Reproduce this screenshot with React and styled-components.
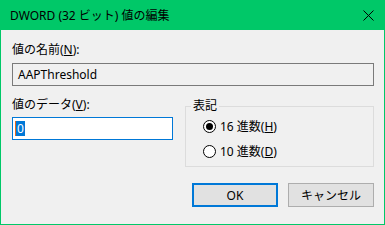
import React from "react";
import styled, { createGlobalStyle } from "styled-components";

const GlobalStyle = createGlobalStyle`
  html, body {
    margin: 0;
    padding: 0;
    background: #f0f0f0;
  }
  body {
    font-family: "Noto Sans", "Noto Sans CJK JP", sans-serif;
    font-size: 12px;
    color: #000;
  }
`;

const Window = styled.div`
  width: 385px;
  height: 225px;
  box-sizing: border-box;
  border: 1px solid #00c868;
  border-top: none;
  background: #f0f0f0;
  display: flex;
  flex-direction: column;
`;

const TitleBar = styled.div`
  height: 30px;
  margin: 0 -1px;
  background: #00c868;
  display: flex;
  align-items: center;
  justify-content: space-between;
  padding: 0 11px 0 10px;
  font-size: 12px;
  color: #000;
`;

const CloseIcon = () => (
  <svg width="11" height="11" viewBox="0 0 11 11">
    <path d="M0.5 0.5 L10.5 10.5 M10.5 0.5 L0.5 10.5" stroke="#000" strokeWidth="1" />
  </svg>
);

const Content = styled.div`
  padding: 0 10px 0 11px;
  display: flex;
  flex-direction: column;
`;

const Label = styled.div`
  height: 16px;
  line-height: 16px;
  margin-top: ${(p) => p.$top || 0}px;
`;

const Key = styled.span`
  text-decoration: underline;
`;

const NameBox = styled.div`
  margin-top: 5px;
  height: 23px;
  box-sizing: border-box;
  border: 1px solid #7a7a7a;
  background: #f0f0f0;
  padding: 0 5px;
  display: flex;
  align-items: center;
`;

const Row = styled.div`
  display: flex;
  gap: 12px;
`;

const LeftCol = styled.div`
  width: 161px;
  display: flex;
  flex-direction: column;
`;

const DataBox = styled.div`
  margin-top: 4px;
  height: 23px;
  box-sizing: border-box;
  border: 1px solid #0078d7;
  background: #fff;
  padding: 0 2px;
  display: flex;
  align-items: center;
`;

const Selected = styled.span`
  background: #0078d7;
  color: #fff;
  line-height: 15px;
  padding: 0 1px;
  border-left: 1px solid #e86a1c;
`;

const Group = styled.fieldset`
  margin: 12px 0 0 0;
  width: 189px;
  box-sizing: border-box;
  border: 1px solid #dcdcdc;
  padding: 4px 0 7px 17px;
  display: flex;
  flex-direction: column;
  gap: 9px;
`;

const Legend = styled.legend`
  padding: 0 2px;
  margin-left: -12px;
  line-height: 16px;
`;

const RadioRow = styled.div`
  height: 16px;
  display: flex;
  align-items: center;
  gap: 4px;
`;

const RadioCircle = styled.span`
  width: 13px;
  height: 13px;
  box-sizing: border-box;
  border: 1px solid #000;
  border-radius: 50%;
  background: #fff;
  display: flex;
  align-items: center;
  justify-content: center;
  &::after {
    content: "";
    display: ${(p) => (p.$checked ? "block" : "none")};
    width: 7px;
    height: 7px;
    border-radius: 50%;
    background: #000;
  }
`;

const Buttons = styled.div`
  margin-top: 16px;
  display: flex;
  justify-content: flex-end;
  gap: 10px;
  padding-left: 179px;
`;

const Button = styled.button`
  width: 86px;
  height: 24px;
  box-sizing: border-box;
  margin: 0;
  padding: 0;
  font: inherit;
  color: #000;
  background: #e1e1e1;
  border: ${(p) => (p.$primary ? "2px solid #0078d7" : "1px solid #adadad")};
`;

export default function App() {
  return (
    <>
      <GlobalStyle />
      <Window>
        <TitleBar>
          <span>DWORD (32 ビット) 値の編集</span>
          <CloseIcon />
        </TitleBar>
        <Content>
          <Label $top={12}>
            値の名前(<Key>N</Key>):
          </Label>
          <NameBox>AAPThreshold</NameBox>
          <Row>
            <LeftCol>
              <Label $top={11}>
                値のデータ(<Key>V</Key>):
              </Label>
              <DataBox>
                <Selected>0</Selected>
              </DataBox>
            </LeftCol>
            <Group>
              <Legend>表記</Legend>
              <RadioRow>
                <RadioCircle $checked />
                <span>
                  16 進数(<Key>H</Key>)
                </span>
              </RadioRow>
              <RadioRow>
                <RadioCircle />
                <span>
                  10 進数(<Key>D</Key>)
                </span>
              </RadioRow>
            </Group>
          </Row>
          <Buttons>
            <Button $primary>OK</Button>
            <Button>キャンセル</Button>
          </Buttons>
        </Content>
      </Window>
    </>
  );
}
